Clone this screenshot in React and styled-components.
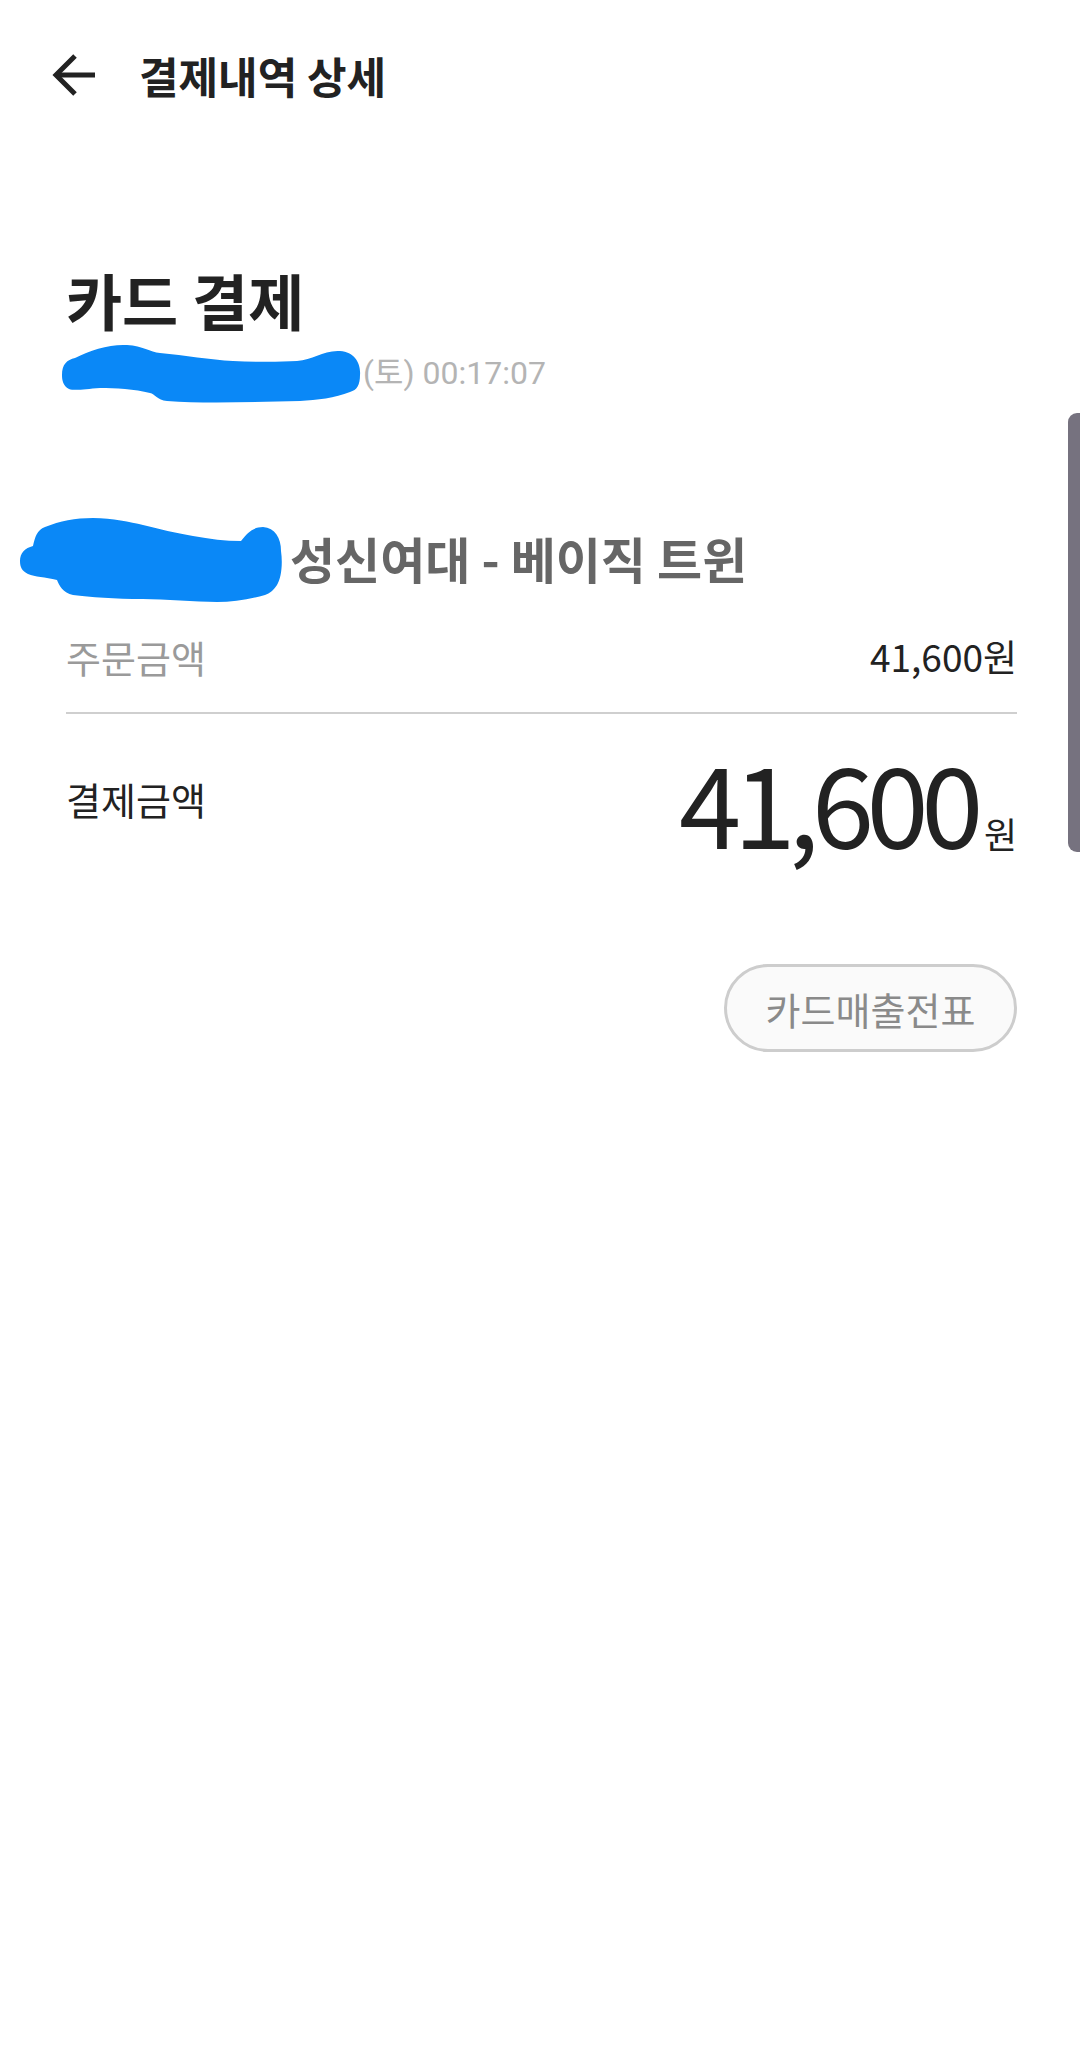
import React from "react";
import styled, { createGlobalStyle } from "styled-components";

const GlobalStyle = createGlobalStyle`
  html, body {
    margin: 0;
    padding: 0;
    background: #ffffff;
  }
  body {
    font-family: "Noto Sans CJK KR", "Noto Sans", sans-serif;
    color: #222222;
  }
`;

const Screen = styled.div`
  position: relative;
  width: 1080px;
  min-height: 2071px;
  background: #ffffff;
  overflow: hidden;
`;

// Top bar
const TopBar = styled.header`
  height: 150px;
  display: flex;
  align-items: center;
  padding-left: 52px;
  gap: 43px;
`;

const BackButton = styled.button`
  width: 44px;
  height: 44px;
  padding: 0;
  border: none;
  background: none;
  display: flex;
  align-items: center;
  justify-content: center;
  cursor: pointer;
`;

const TopTitle = styled.h1`
  margin: 0;
  font-size: 43px;
  font-weight: 700;
  color: #222222;
`;

// Body
const Content = styled.main`
  padding: 0 63px 0 66px;
`;

const PayType = styled.h2`
  margin: 114px 0 0;
  font-size: 61px;
  line-height: 72px;
  font-weight: 700;
  color: #222222;
`;

const InfoRow = styled.div`
  display: flex;
  align-items: center;
  height: ${(p) => p.$h}px;
  margin-top: ${(p) => p.$mt}px;
  white-space: nowrap;
`;

const Redacted = styled.span`
  position: relative;
  flex-shrink: 0;
  width: ${(p) => p.$w}px;
  height: 100%;

  svg {
    position: absolute;
    left: ${(p) => p.$x}px;
    top: ${(p) => p.$y}px;
  }
`;

const DateText = styled.span`
  font-family: Roboto, "Noto Sans CJK KR", sans-serif;
  font-size: 32px;
  color: #b4b4b4;
`;

const StoreName = styled.span`
  font-size: 49px;
  font-weight: 700;
  color: #666666;
`;

const AmountRow = styled.div`
  display: flex;
  align-items: center;
  justify-content: space-between;
  height: ${(p) => p.$h}px;
  margin-top: ${(p) => p.$mt}px;
`;

const Label = styled.span`
  font-size: 38px;
  color: ${(p) => (p.$muted ? "#9a9a9a" : "#222222")};
`;

const SmallAmount = styled.span`
  font-size: 37px;
  color: #222222;
`;

const Divider = styled.hr`
  margin: 31px 0 0;
  border: none;
  height: 2px;
  background: #cfcfcf;
`;

const BigAmount = styled.div`
  display: flex;
  align-items: baseline;
  line-height: 112px;
  padding-top: 36px;
`;

const BigNumber = styled.span`
  font-size: 112px;
  color: #222222;
  letter-spacing: -7.5px;
`;

const Won = styled.span`
  font-size: 36px;
  color: #222222;
  margin-left: 8px;
`;

const Actions = styled.div`
  display: flex;
  justify-content: flex-end;
  margin-top: 110px;
`;

const SlipButton = styled.button`
  height: 88px;
  width: 293px;
  border: 3px solid #cdcdcd;
  border-radius: 44px;
  background: #fafafa;
  color: #8a8a8a;
  font-family: "Noto Sans CJK KR", sans-serif;
  font-size: 38px;
  cursor: pointer;
`;

const ScrollThumb = styled.div`
  position: absolute;
  top: 413px;
  right: 0;
  width: 12px;
  height: 439px;
  background: #76727f;
  border-radius: 9px 0 0 9px;
`;

const BackArrow = () => (
  <svg width="44" height="44" viewBox="0 0 44 44" fill="none">
    <path d="M43 22H4" stroke="#222" strokeWidth="5" />
    <path d="M23 3L4 22l19 19" stroke="#222" strokeWidth="5" />
  </svg>
);

const ScribbleDate = () => (
  <svg width="310" height="70" viewBox="0 0 310 70">
    <path
      d="M7 37 C7 26 12 22 20 20 C35 12 55 6 72 7 C88 8 95 14 105 15 C130 17 155 22 178 23 C200 24 225 24 242 23 C258 22 268 12 285 13 C300 14 306 26 305 37 C305 47 302 52 295 54 C280 60 262 62 245 63 C200 64 150 66 112 63 C102 62 100 56 95 55 C80 51 60 50 45 50 C30 51 20 53 14 51 C8 48 7 42 7 37 Z"
      fill="#0a88f7"
    />
  </svg>
);

const ScribbleStore = () => (
  <svg width="272" height="95" viewBox="0 0 272 95">
    <path
      d="M5 48 C5 40 10 35 18 33 C20 24 22 17 30 14 C45 8 60 5 78 5 C98 5 115 9 128 12 C145 16 160 20 178 23 C195 26 210 28 226 28 C232 20 238 14 248 14 C260 15 266 25 266 38 C268 52 266 66 262 72 C258 78 255 80 250 82 C235 86 218 89 202 89 C180 89 150 86 128 86 C100 86 75 84 58 82 C48 80 44 72 42 67 C30 64 20 64 13 61 C7 58 5 54 5 48 Z"
      fill="#0a88f7"
    />
  </svg>
);

const App = () => {
  return (
    <Screen>
      <GlobalStyle />
      <TopBar>
        <BackButton aria-label="뒤로">
          <BackArrow />
        </BackButton>
        <TopTitle>결제내역 상세</TopTitle>
      </TopBar>

      <Content>
        <PayType>카드 결제</PayType>

        <InfoRow $h={40} $mt={14}>
          <Redacted $w={297} $x={-11} $y={-12}>
            <ScribbleDate />
          </Redacted>
          <DateText>(토) 00:17:07</DateText>
        </InfoRow>

        <InfoRow $h={60} $mt={137}>
          <Redacted $w={224} $x={-51} $y={-14}>
            <ScribbleStore />
          </Redacted>
          <StoreName>성신여대 - 베이직 트윈</StoreName>
        </InfoRow>

        <AmountRow $h={50} $mt={44}>
          <Label $muted>주문금액</Label>
          <SmallAmount>41,600원</SmallAmount>
        </AmountRow>

        <Divider />

        <AmountRow $h={112} $mt={28}>
          <Label>결제금액</Label>
          <BigAmount>
            <BigNumber>41,600</BigNumber>
            <Won>원</Won>
          </BigAmount>
        </AmountRow>

        <Actions>
          <SlipButton>카드매출전표</SlipButton>
        </Actions>
      </Content>

      <ScrollThumb />
    </Screen>
  );
};

export default App;
